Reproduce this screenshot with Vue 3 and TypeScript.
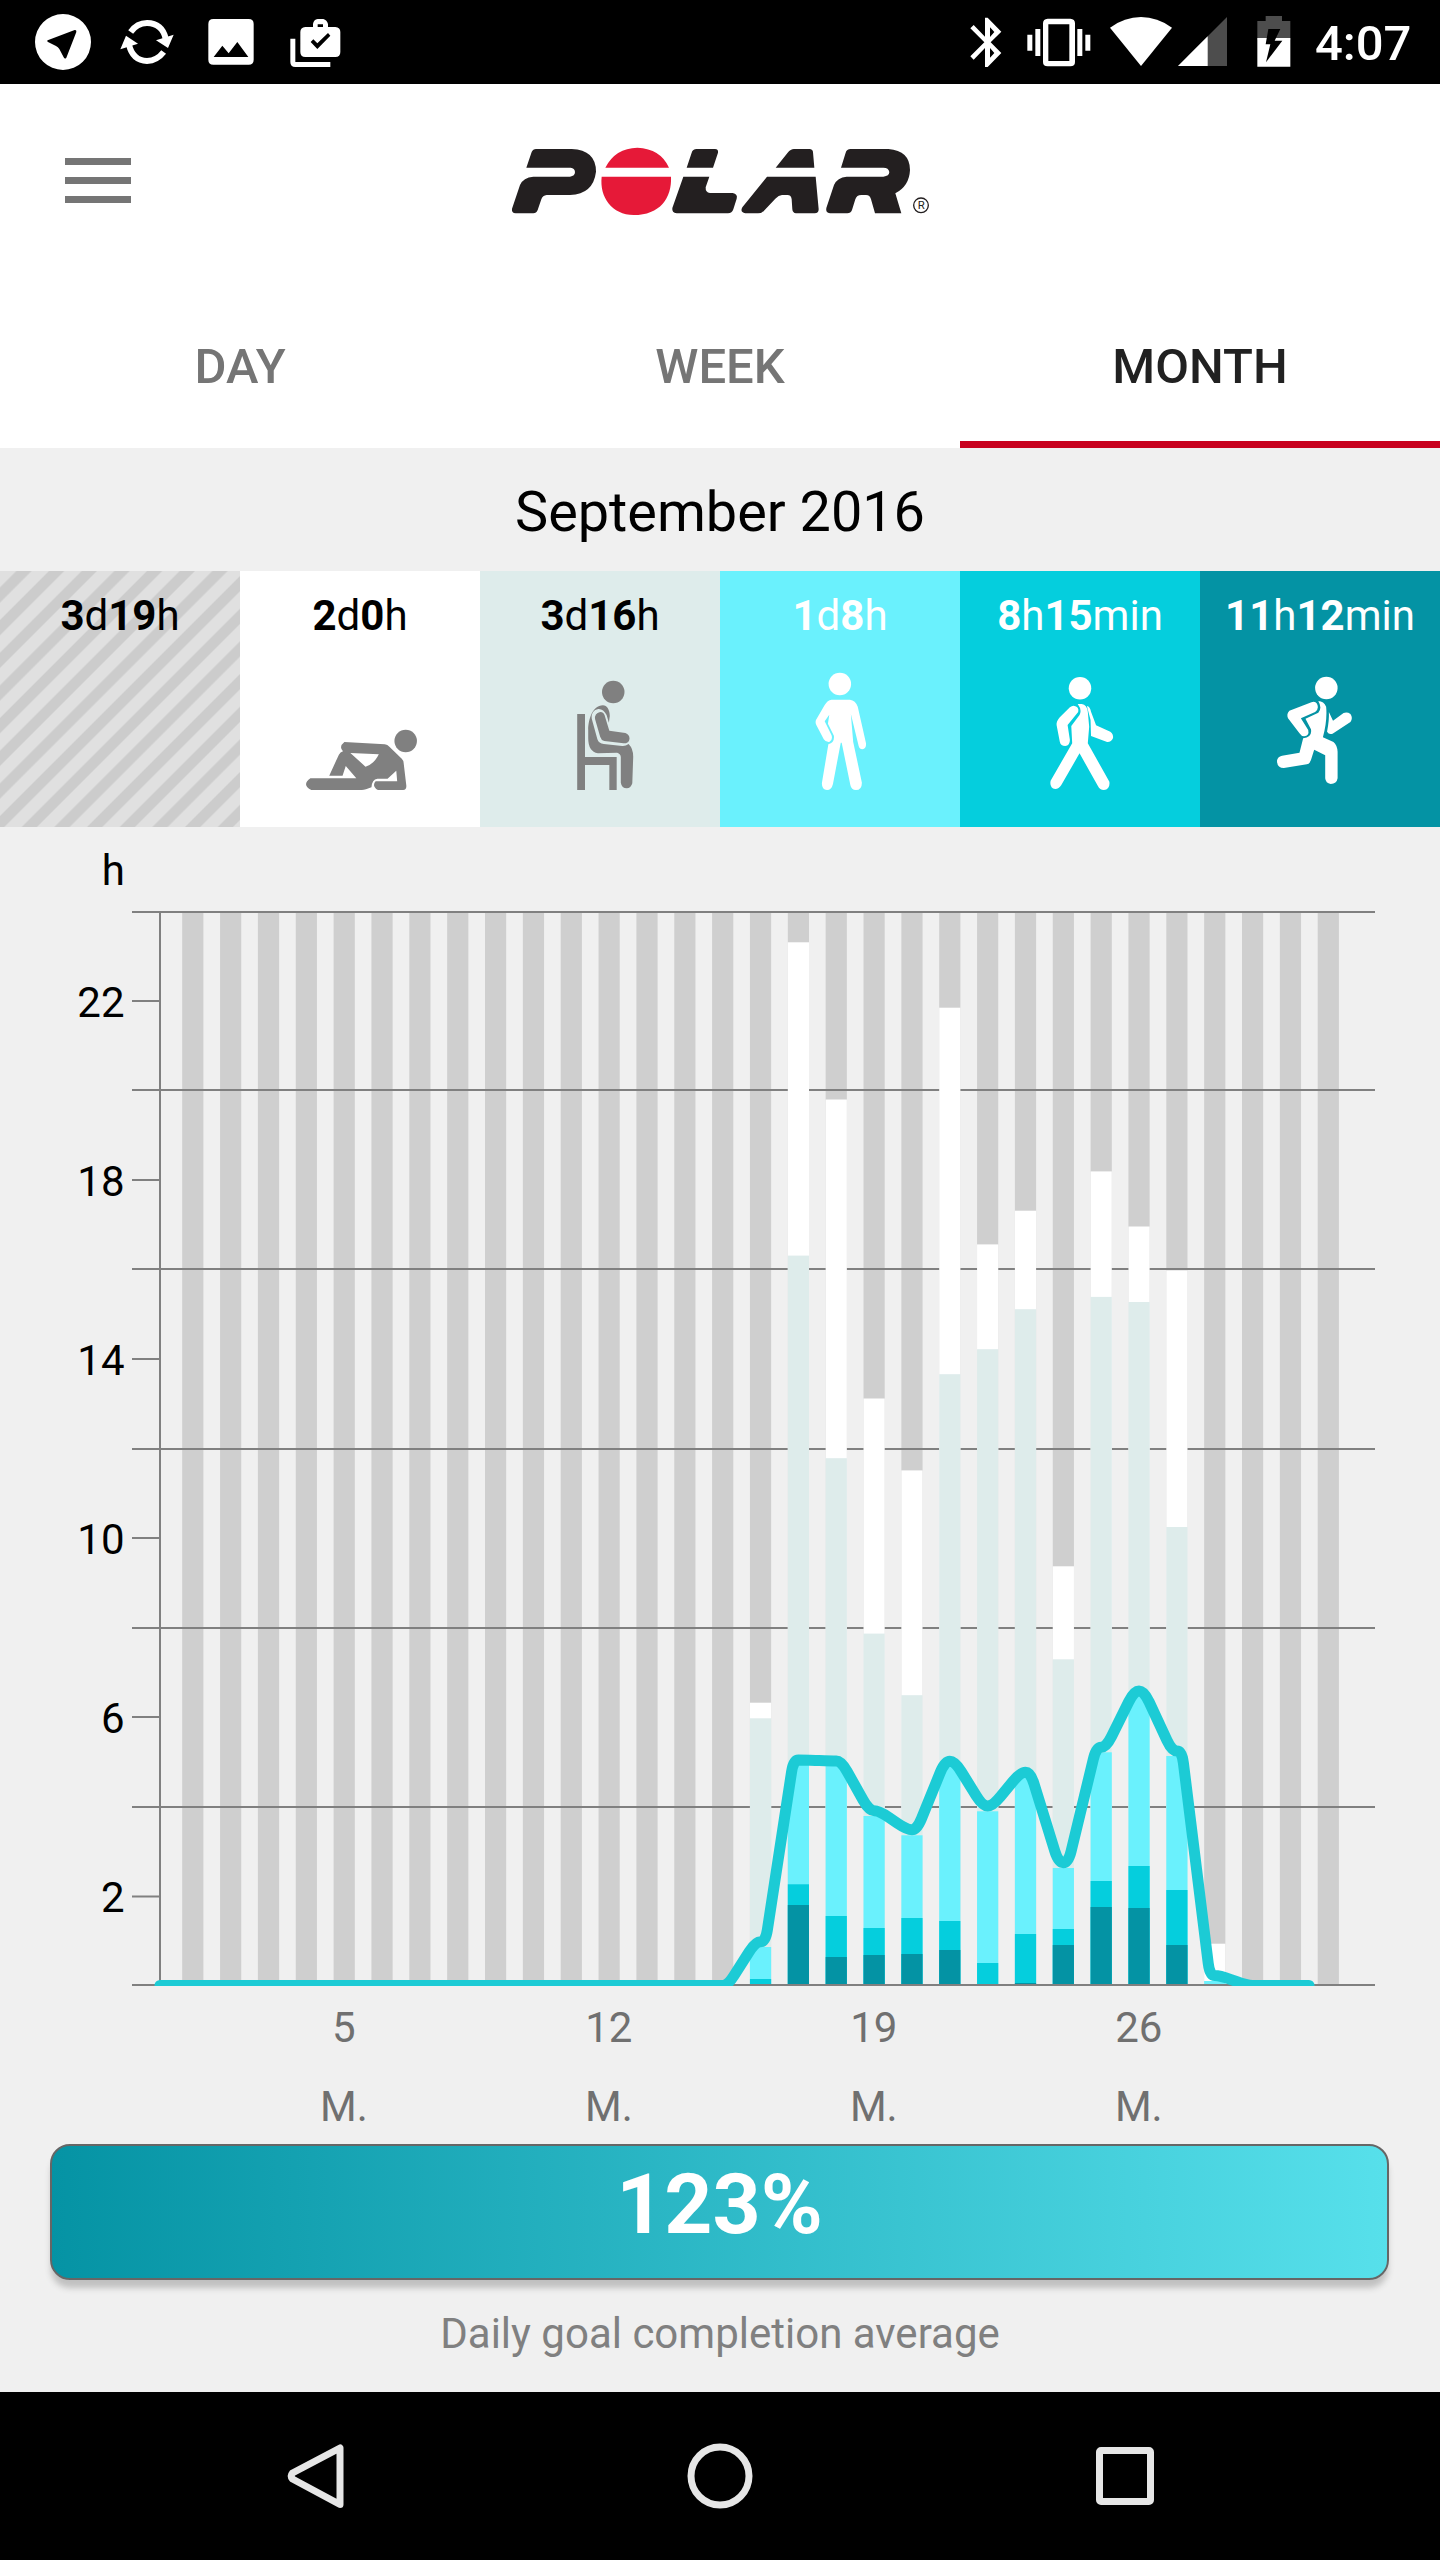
<script setup lang="ts">
interface Segment { n: string; u: string }
interface Zone { key: string; parts: Segment[]; box: string; shapes: string[]; head?: [number, number] }
interface Day { day: number; rest: number; sit: number; stand: number; walk: number; run: number }

const tabs = ['DAY', 'WEEK', 'MONTH']
const active = 'MONTH'

const zones: Zone[] = [
  { key: 'nodata', parts: [{ n: '3', u: 'd' }, { n: '19', u: 'h' }], box: '0 300 522.67 501', shapes: [] },
  {
    key: 'rest', parts: [{ n: '2', u: 'd' }, { n: '0', u: 'h' }], box: '522.67 300 522.67 501', head: [883.5, 543],
    shapes: ['M750 546L838 553Q844 554 848 560L875 596Q879 602 879 608L885 678Q885 690 878 690H823Q809 678 818 664H865L863 632L844 656H822Q810 658 809 682L797 688Q792 690 788 690H678Q656 674 676 655H776L753 618L746 647H717L738 584Q741 577 747 574Q737 560 750 546ZM763 579L796 620Q815 612 825 583Z'],
  },
  {
    key: 'sit', parts: [{ n: '3', u: 'd' }, { n: '16', u: 'h' }], box: '1045.33 300 522.67 501', head: [1335.5, 396],
    shapes: [
      'M1257 462H1274V591H1343V690H1327V615H1274V690H1257Z',
      'M1313 436C1322 436 1328 450 1328 468L1326 488L1321 465Q1314 446 1303 447C1290 450 1287 466 1289 478L1301 538Q1304 551 1315 552L1355 558Q1362 559 1369 552Q1379 566 1379 590L1377 670Q1374 685 1365 685Q1354 685 1352 668V592Q1352 581 1344 578L1302 580Q1281 575 1281 535V510C1281 480 1290 436 1313 436Z',
      'M1307 456Q1316 456 1318 472L1327 512L1362 519Q1371 524 1371 536Q1370 550 1358 550L1316 543Q1309 540 1307 530L1296 478Q1294 460 1307 456Z',
    ],
  },
  {
    key: 'stand', parts: [{ n: '1', u: 'd' }, { n: '8', u: 'h' }], box: '0 300 522.67 501', head: [261, 372],
    shapes: ['M243 419H283Q295 421 300 440L318 550Q319 566 310 568Q304 568 302 558L285 462L290 545L309 668Q309 690 296 690Q286 690 284 676L265 548H263L246 672Q243 690 233 690Q221 688 222 668L236 553Q250 548 248 527L235 491L238 464L228 484L243 526Q246 540 238 546Q230 547 226 538L210 496Q207 488 209 480L228 435Q234 420 243 419Z'],
  },
  {
    key: 'walk', parts: [{ n: '8', u: 'h' }, { n: '15', u: 'min' }], box: '522.67 300 522.67 501', head: [784, 384.5],
    shapes: [
      'M779 432H788Q799 434 801 455L804 500L801 550L848 665Q850 688 836 690Q827 690 823 678L783 580L743 676Q738 687 730 687Q717 684 720 662L767 550L765 498L783 465Q789 450 779 432Z',
      'M770 437Q783 440 780 456L757 495L762 540Q762 557 752 558Q742 558 740 545L733 495Q732 485 740 472L762 442Q766 437 770 437Z',
      'M799 438Q806 440 808 455L819 496L850 515Q857 522 856 534Q852 547 843 546L808 528L807 480Z',
    ],
  },
  {
    key: 'run', parts: [{ n: '11', u: 'h' }, { n: '12', u: 'min' }], box: '1045.33 300 522.67 501', head: [1320.5, 384],
    shapes: [
      'M1293 425Q1302 427 1302 442Q1302 450 1296 456L1265 475L1281 510Q1284 528 1272 529Q1266 529 1262 520L1237 475Q1233 462 1240 452L1288 427Z',
      'M1303 423Q1315 424 1320 440Q1323 480 1313 532L1336 546Q1344 555 1345 575V655Q1343 672 1330 672Q1319 670 1318 655V586L1294 569L1287 600Q1284 612 1278 613L1228 624Q1213 624 1213 602Q1214 590 1224 587L1262 578L1270 535Q1290 532 1287 508L1275 476L1303 458Q1312 445 1303 423Z',
      'M1326 456L1335 482L1358 459Q1366 455 1373 462Q1379 474 1373 486L1334 521Q1326 525 1322 515Q1327 480 1326 456Z',
    ],
  },
]

// Chart geometry
const BASE = 1984
const PITCH = 37.85
const BAR = 21.2
const barX = (day: number): number => 182.2 + PITCH * (day - 1)
const center = (day: number): number => barX(day) + BAR / 2
const gridLines = [911, 1089, 1268, 1448, 1627, 1806, 1984]
const ticks = [
  { label: '22', y: 1000 }, { label: '18', y: 1179 }, { label: '14', y: 1358 },
  { label: '10', y: 1537 }, { label: '6', y: 1716 }, { label: '2', y: 1895.5 },
]
const mondays = [5, 12, 19, 26]

// Top edge of every stacked zone for each recorded day
const days: Day[] = [
  { day: 16, rest: 1702.7, sit: 1718.3, stand: 1947, walk: 1979, run: BASE },
  { day: 17, rest: 942.3, sit: 1255.6, stand: 1765, walk: 1884.3, run: 1905 },
  { day: 18, rest: 1099.5, sit: 1458.2, stand: 1766, walk: 1916, run: 1957 },
  { day: 19, rest: 1398.5, sit: 1633.6, stand: 1816, walk: 1928, run: 1955 },
  { day: 20, rest: 1470.4, sit: 1695.2, stand: 1835.3, walk: 1918, run: 1954 },
  { day: 21, rest: 1007.7, sit: 1374.2, stand: 1766, walk: 1921, run: 1950 },
  { day: 22, rest: 1244.4, sit: 1349.2, stand: 1811.3, walk: 1963, run: BASE },
  { day: 23, rest: 1210.7, sit: 1309.2, stand: 1777, walk: 1934, run: 1983 },
  { day: 24, rest: 1566.3, sit: 1659.3, stand: 1868, walk: 1929, run: 1945 },
  { day: 25, rest: 1171.4, sit: 1296.9, stand: 1752.3, walk: 1881, run: 1907 },
  { day: 26, rest: 1226.5, sit: 1302, stand: 1696, walk: 1866, run: 1908 },
  { day: 27, rest: 1270.4, sit: 1527, stand: 1756, walk: 1890, run: 1945 },
  { day: 28, rest: 1943.7, sit: 1981, stand: 1981, walk: BASE, run: BASE },
]
const layers = ['rest', 'sit', 'stand', 'walk', 'run'] as const

const trend: [number, number][] = [
  [15, 1985.5], [16, 1941.7], [17, 1760], [18, 1761], [19, 1810.7], [20, 1829.7], [21, 1761.3],
  [22, 1806], [23, 1772.3], [24, 1862.7], [25, 1747.3], [26, 1691], [27, 1751], [28, 1975.5], [29, 1985.5],
]

function roundedPath(radius: number): string {
  const pts: [number, number][] = [[160, 1985.5]]
  for (const [day, y] of trend) pts.push([center(day) - 5, y], [center(day) + 5, y])
  pts.push([1309, 1985.5])
  const toward = (a: [number, number], b: [number, number]): string => {
    const len = Math.hypot(b[0] - a[0], b[1] - a[1])
    const t = Math.min(radius, len / 2) / len
    return `${(a[0] + (b[0] - a[0]) * t).toFixed(2)} ${(a[1] + (b[1] - a[1]) * t).toFixed(2)}`
  }
  let d = `M${pts[0][0]} ${pts[0][1]}`
  for (let i = 1; i < pts.length - 1; i++) {
    d += `L${toward(pts[i], pts[i - 1])}Q${pts[i][0].toFixed(2)} ${pts[i][1]} ${toward(pts[i], pts[i + 1])}`
  }
  const last = pts[pts.length - 1]
  return `${d}L${last[0]} ${last[1]}`
}
const trendPath = roundedPath(12)
</script>

<template>
  <main class="screen">
    <div class="status">
      <div class="group left">
        <svg width="56" height="84" viewBox="105 0 168 252" fill="#fff">
          <path fill-rule="evenodd" d="M189 42a84 84 0 1 0 0 168a84 84 0 1 0 0-168ZM143 121L224 90Q230 89 229 96L199 173Q195 179 191 172L178 147Q174 141 168 138L144 126Q139 123 143 121Z" />
        </svg>
        <svg width="54" height="84" viewBox="359 0 162 252" fill="none" stroke="#fff" stroke-width="18">
          <path d="M391 96Q410 69 440 69Q486 70 496 116" />
          <path d="M490 156Q470 182 440 183Q397 182 386 134" />
          <path fill="#fff" stroke="none" d="M467 121L520 104L503 144ZM360 148L377 107L413 131Z" />
        </svg>
        <svg width="46" height="84" viewBox="624 0 138 252" fill="#fff">
          <path fill-rule="evenodd" d="M640 57H746Q761 57 761 72V179Q761 194 746 194H640Q625 194 625 179V72Q625 57 640 57ZM641 171H745L712 126L686 160L667 137Z" />
        </svg>
        <svg width="51" height="84" viewBox="869 0 153 252" fill="#fff">
          <path d="M870 116H885V186H990V201H885Q870 201 870 186Z" />
          <path fill-rule="evenodd" d="M915 81H938V72Q940 59 952 57H969Q980 60 983 72V81H1005Q1020 82 1020 96V156Q1020 171 1005 171H915Q900 171 900 156V96Q900 82 915 81ZM952 73V81H968V73ZM931 126L951 147L990 107L983 99L951 130L939 118Z" />
        </svg>
      </div>
      <div class="group right">
        <svg width="32" height="84" viewBox="90 0 96 252" fill="#fff">
          <path fill-rule="evenodd" d="M135 53H143L184 95L152 127L184 159L143 201H135V144L101 179L91 169L133 127L91 85L101 75L135 110ZM150 82V111L163 96ZM150 144V173L163 159Z" />
        </svg>
        <svg width="64" height="84" viewBox="260 0 192 252" fill="#fff">
          <path fill-rule="evenodd" d="M261 104H276V152H261ZM285 87H300V168H285ZM411 87H426V168H411ZM435 104H450V152H435ZM322 56H390Q404 57 404 70V186Q404 199 390 199H322Q308 199 308 186V70Q308 57 322 56ZM324 73V183H387V73Z" />
        </svg>
        <svg width="62" height="84" viewBox="510 0 186 252" fill="#fff"><path d="M510 83Q554 51 603 51Q652 51 696 83L603 198Z" /></svg>
        <svg width="49" height="84" viewBox="714 0 147 252"><path fill="#4d4d4d" d="M861 51V198H714Z" /><path fill="#fff" d="M803 109V198H714Z" /></svg>
        <svg width="34" height="84" viewBox="950 0 102 252">
          <path fill="#4d4d4d" d="M976 48H1025V63H1050V120H951V63H976Z" />
          <path fill="#fff" d="M951 114H1050V200H951Z" />
          <path fill="#000" d="M984 87H1020L1003 122H1026L977 187L990 133H976Z" />
        </svg>
        <span class="clock">4:07</span>
      </div>
    </div>

    <header class="appbar">
      <div class="menu"><i></i><i></i><i></i></div>
      <svg class="logo" width="460" height="120" viewBox="0 0 1380 360" fill="#231f20">
        <path d="M125 96Q129 87 138 87H245Q318 90 318 155Q310 222 240 225H170Q158 226 154 238L143 270Q139 280 130 280H77Q64 279 66 266L90 195Q100 172 130 170H240Q255 168 255 156Q254 144 242 143H109Z" />
        <path fill="#e61938" d="M346 143Q376 84 442 83Q512 86 537 143ZM335 170H543C546 234 510 285 431 285C366 284 328 232 335 170Z" />
        <path d="M590 143L605 98Q608 87 620 87H675Q686 88 684 98L669 143ZM580 170H658L647 202Q646 218 660 219H728Q744 222 740 236L730 268Q726 280 714 280H560Q545 279 547 264Z" />
        <path d="M857 143L893 98Q902 87 912 87H958Q969 88 969 97L973 143ZM831 170H977L986 268Q986 280 974 280H918Q908 279 907 268L905 238Q904 225 892 225H876Q866 226 856 236L822 272Q815 280 804 280H766Q749 276 757 262Z" />
        <path d="M1053 143L1067 98Q1070 87 1082 87H1195Q1260 92 1260 150Q1258 198 1216 220L1234 280H1155L1143 238Q1140 225 1128 225H1114Q1100 225 1096 238L1086 270Q1082 280 1072 280H1020Q1006 278 1009 264L1032 195Q1042 172 1070 170H1180Q1198 168 1198 156Q1196 143 1180 143Z" />
        <circle cx="1293" cy="256" r="22" fill="none" stroke="#231f20" stroke-width="4" />
        <text x="1294" y="268" font-size="34" text-anchor="middle">R</text>
      </svg>
    </header>

    <nav class="tabs">
      <div v-for="t in tabs" :key="t" class="tab" :class="{ active: t === active }">{{ t }}</div>
    </nav>

    <h1 class="period">September 2016</h1>

    <section class="zones">
      <div v-for="z in zones" :key="z.key" class="zone" :class="z.key">
        <div class="time"><template v-for="p in z.parts" :key="p.u"><b>{{ p.n }}</b>{{ p.u }}</template></div>
        <svg width="240" height="167" :viewBox="z.box" preserveAspectRatio="none">
          <ellipse v-if="z.head" :cx="z.head[0]" :cy="z.head[1]" rx="24.5" ry="33.8" />
          <path v-for="(d, i) in z.shapes" :key="i" :d="d" fill-rule="evenodd" />
        </svg>
      </div>
    </section>

    <svg class="chart" width="1440" height="1317" viewBox="0 827 1440 1317">
      <defs><clipPath id="plot"><rect x="0" y="827" width="1440" height="1159" /></clipPath></defs>
      <rect v-for="d in 31" :key="'bg' + d" class="empty" :x="barX(d)" y="912" :width="BAR" :height="BASE - 912" />
      <g class="axis">
        <rect v-for="y in gridLines" :key="y" x="132" :y="y" width="1243" height="2" />
        <rect v-for="t in ticks" :key="t.label" x="132" :y="t.y" width="28" height="2" />
        <rect x="159" y="911" width="2" height="1074" />
      </g>
      <g v-for="d in days" :key="d.day">
        <rect v-for="l in layers" :key="l" :class="'fill-' + l" :x="barX(d.day)" :y="d[l]" :width="BAR" :height="BASE - d[l]" />
      </g>
      <path class="trend" :d="trendPath" clip-path="url(#plot)" />
      <text x="125" y="885" text-anchor="end">h</text>
      <text v-for="t in ticks" :key="'l' + t.label" x="124.5" :y="t.y + 16.5" text-anchor="end">{{ t.label }}</text>
      <g class="dates">
        <template v-for="m in mondays" :key="m">
          <text :x="center(m) - 0.3" y="2042" text-anchor="middle">{{ m }}</text>
          <text :x="center(m) - 0.3" y="2121" text-anchor="middle">M.</text>
        </template>
      </g>
    </svg>

    <div class="goal">123%</div>
    <p class="caption">Daily goal completion average</p>

    <footer class="navbar">
      <svg width="65" height="66" viewBox="0 0 65 66"><path d="M54 5V61.5L6.5 36Q4 33 6.5 30Z" /></svg>
      <svg width="66" height="66" viewBox="0 0 66 66"><circle cx="33" cy="33" r="29" /></svg>
      <svg width="60" height="66" viewBox="0 0 60 66"><rect x="4.5" y="7.5" width="51" height="51" rx="1.5" /></svg>
    </footer>
  </main>
</template>

<style>
body { margin: 0; }
</style>

<style scoped>
.screen { width: 1440px; height: 2560px; background: #f0f0f0; font-family: Roboto, sans-serif; display: flex; flex-direction: column; overflow: hidden; color: #000; }
svg { display: block; flex: none; }
.status { height: 84px; background: #000; display: flex; justify-content: space-between; flex: none; }
.group { display: flex; }
.left { padding-left: 35px; }
.left svg:nth-child(2) { margin-left: 29px; }
.left svg:nth-child(3) { margin-left: 34px; }
.left svg:nth-child(4) { margin-left: 36px; }
.right { width: 470px; }
.right svg:nth-child(2) { margin-left: 25px; }
.right svg:nth-child(3) { margin-left: 19px; }
.right svg:nth-child(4) { margin-left: 6px; }
.right svg:nth-child(5) { margin-left: 30px; }
.clock { color: #fff; font-size: 49px; font-weight: 500; line-height: 88px; margin-left: 24px; }
.appbar { height: 216px; background: #fff; display: flex; align-items: flex-start; flex: none; }
.menu { width: 66px; margin: 74px 359px 0 65px; display: flex; flex-direction: column; gap: 12px; }
.menu i { height: 7px; background: #757575; }
.logo { margin-top: 36px; }
.tabs { display: flex; height: 148px; background: #fff; flex: none; }
.tab { flex: 1; box-sizing: border-box; border-bottom: 7px solid transparent; text-align: center; font-size: 49px; font-weight: 500; line-height: 134px; color: #757575; }
.tab.active { color: #212121; border-color: #c8001e; }
.period { margin: 0; height: 123px; line-height: 129px; font-size: 55.8px; font-weight: 400; text-align: center; flex: none; }
.zones { display: flex; height: 256px; flex: none; }
.zone { width: 240px; fill: #808080; }
.time { height: 89px; line-height: 89px; font-size: 42px; text-align: center; white-space: nowrap; }
.time b { font-weight: 700; }
.nodata { background: repeating-linear-gradient(135deg, #e0e0e0 0, #e0e0e0 10.8px, #ccc 12.3px, #ccc 21.6px, #e0e0e0 23.1px); }
.rest { background: #fff; }
.sit { background: #deeceb; }
.stand { background: #6af1fd; color: #fff; fill: #fff; }
.walk { background: #05cedd; color: #fff; fill: #fff; }
.run { background: #0493a4; color: #fff; fill: #fff; }
.chart { font-size: 42px; }
.empty { fill: #cfcfcf; }
.axis { fill: #808080; }
.fill-rest { fill: #fff; }
.fill-sit { fill: #deeceb; }
.fill-stand { fill: #6af1fd; }
.fill-walk { fill: #05cedd; }
.fill-run { fill: #0493a4; }
.trend { fill: none; stroke: #1ccbd5; stroke-width: 11; stroke-linecap: round; }
.dates { fill: #707070; }
.goal { flex: none; box-sizing: border-box; margin: 0 50px; width: 1339px; height: 136px; border: 2px solid #666; border-radius: 20px; background: linear-gradient(90deg, #0593a4, #57e0eb); background-origin: border-box; box-shadow: 0 9px 6px -1px #c0c0c0; color: #fff; font-size: 84px; font-weight: 700; line-height: 118px; text-align: center; }
.caption { flex: none; margin: 0; height: 112px; line-height: 108px; font-size: 42px; color: #808080; text-align: center; }
.navbar { flex: none; height: 168px; background: #000; display: flex; align-items: flex-start; box-sizing: border-box; padding: 51px 0 0 286px; fill: none; }
.navbar svg { stroke: #e6e6e6; stroke-width: 7; stroke-linejoin: round; }
.navbar svg:nth-child(2) { margin-left: 336px; }
.navbar svg:nth-child(3) { margin-left: 342px; }
</style>
